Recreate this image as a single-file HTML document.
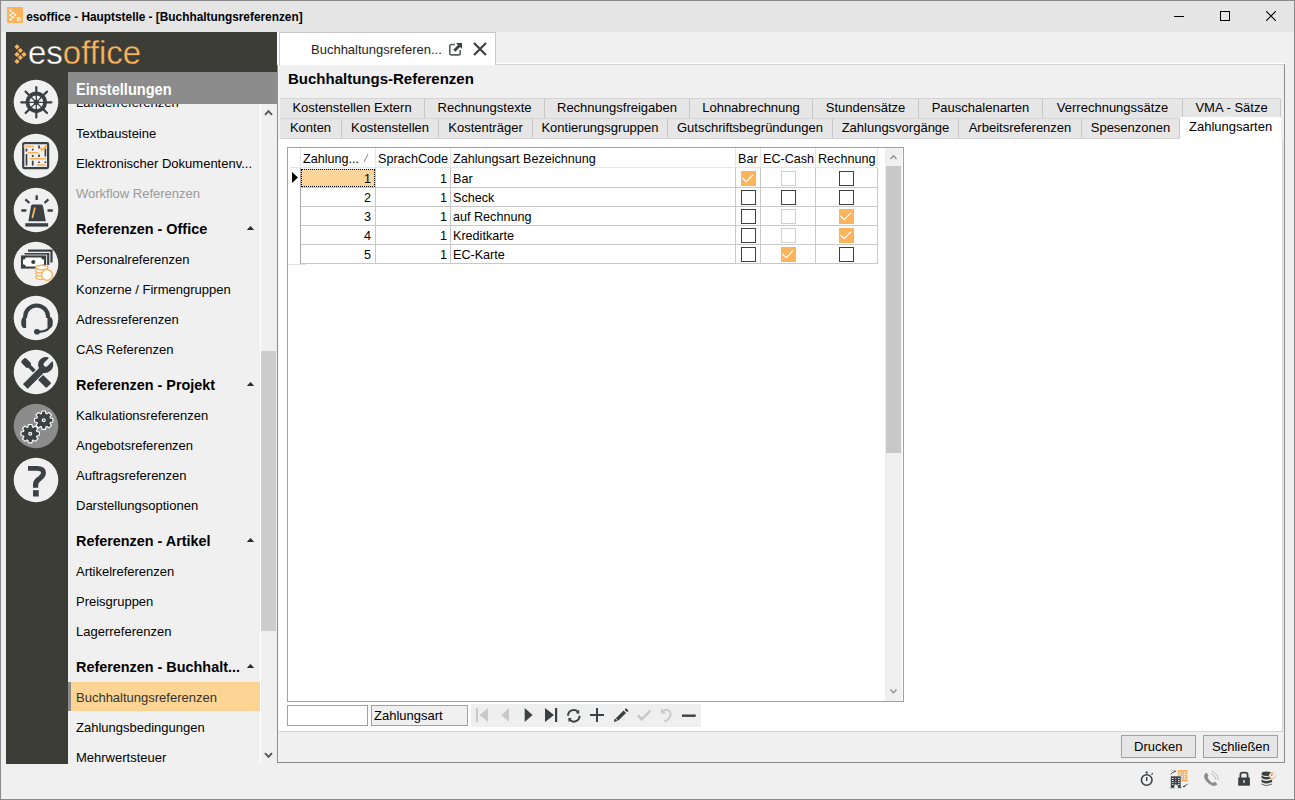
<!DOCTYPE html>
<html><head><meta charset="utf-8">
<style>
*{box-sizing:border-box;margin:0;padding:0}
html,body{width:1295px;height:800px;overflow:hidden;background:#f0f0f0;font-family:"Liberation Sans",sans-serif;font-size:13px;color:#000}
.a{position:absolute}
#win{position:absolute;left:0;top:0;width:1295px;height:800px;border:1px solid #8a8a8a;background:#f0f0f0}
#title{position:absolute;left:0;top:0;width:1295px;height:32px;background:#e5e5e5;border:1px solid #8a8a8a;border-bottom:none}
.t{position:absolute;white-space:nowrap;line-height:1}
/* sidebar */
#side{position:absolute;left:6px;top:32px;width:271px;height:732px;background:#3d3d38}
#sub{position:absolute;left:68px;top:72px;width:209px;height:692px;background:#f0f0f0;overflow:hidden}
#subhead{position:absolute;left:68px;top:72px;width:209px;height:32px;background:#8c8c8c}
.circ{position:absolute;left:14px;width:45px;height:45px;border-radius:50%;background:#f0f0f0}
.si{position:absolute;left:8px;font-size:13px;white-space:nowrap;line-height:1}
.sh{position:absolute;left:8px;font-size:14.4px;font-weight:bold;white-space:nowrap;line-height:1}
.tri{position:absolute;left:178px;width:0;height:0;border-left:5px solid transparent;border-right:5px solid transparent;border-bottom:5px solid #333}
/* tabs */
.tab1,.tab2{position:absolute;height:19px;background:#e6e6e6;border-right:1px solid #c8c8c8;font-size:13px;line-height:17px;text-align:center;white-space:nowrap}
.cb{position:absolute;width:15px;height:15px;border:1.7px solid #3b4043;background:#fff}
.cb.g{border-color:#d0d0d0}
.cb.on{background:#fbb45c;border-color:#fbb45c}
.cell{position:absolute;white-space:nowrap;font-size:12.6px;line-height:1}
</style></head><body>
<div id="win"></div>
<div id="title">
  <svg class="a" style="left:6px;top:6px" width="16" height="16" viewBox="1 1 16 16"><rect x="1" y="1" width="16" height="16" fill="#fbb45c"/><g fill="#fff"><path d="M4.45 3.00L5.90 4.45L4.45 5.90L3.00 4.45Z"/><path d="M6.86 5.41L8.31 6.86L6.86 8.31L5.41 6.86Z"/><path d="M4.45 7.51L5.90 8.96L4.45 10.41L3.00 8.96Z"/><path d="M9.1 7.51L10.55 8.96L9.1 10.41L7.65 8.96Z"/><path d="M6.86 9.75L8.31 11.2L6.86 12.65L5.41 11.2Z"/><path d="M4.45 12.01L5.90 13.46L4.45 14.91L3.00 13.46Z"/></g><path d="M11.5 11.7H12.6Q14.5 11.7 14.5 13Q14.5 14.3 12.6 14.3H11.5Z" fill="none" stroke="#fff" stroke-width="1.1"/></svg>
  <div class="t" style="left:25.2px;top:11px;font-size:11.85px;font-weight:bold">esoffice - Hauptstelle - [Buchhaltungsreferenzen]</div>
</div>

<div id="side">
  <svg class="a" style="left:0px;top:10px" width="24" height="34" viewBox="0 0 24 34"><g fill="#fbb45c"><path d="M11 2.2L13.6 4.8L11 7.4L8.4 4.8Z"/><path d="M14.3 6L16.9 8.6L14.3 11.2L11.7 8.6Z"/><path d="M11 9.8L13.6 12.4L11 15L8.4 12.4Z"/><path d="M18 9.8L20.6 12.4L18 15L15.4 12.4Z"/><path d="M14.3 13L16.9 15.6L14.3 18.2L11.7 15.6Z"/><path d="M11 16.8L13.6 19.4L11 22L8.4 19.4Z"/></g></svg>
  <div class="t" style="left:22px;top:4px;font-size:33px;color:#fff;-webkit-text-stroke:0.35px #3d3d38;letter-spacing:0px">es<span style="color:#fbb45c">office</span></div>
</div>


<!-- sidebar icons -->
<svg class="a" style="left:13px;top:79px" width="46" height="46" viewBox="0 0 46 46"><circle cx="23" cy="23" r="22.3" fill="#f0f0f0"/>
 <g stroke="#3b4043" stroke-width="2.2" stroke-linecap="round"><path d="M23.3 8.2V15M23.3 31.6V38.4M8.2 23.3H15M31.6 23.3H38.4M12.6 12.6L17 17M34 12.6L29.6 17M12.6 34L17 29.6M34 34L29.6 29.6"/></g><g stroke="#3b4043" stroke-width="1.3"><path d="M23.3 14V32.6M14 23.3H32.6M16.7 16.7L29.9 29.9M29.9 16.7L16.7 29.9"/></g>
 <circle cx="23.3" cy="23.3" r="8.8" fill="none" stroke="#3b4043" stroke-width="3.8"/>
 <circle cx="23.3" cy="23.3" r="2.6" fill="#3b4043"/>
</svg>
<svg class="a" style="left:13px;top:133px" width="46" height="46" viewBox="0 0 46 46"><circle cx="23" cy="23" r="22.3" fill="#f0f0f0"/>
 <rect x="10.2" y="10.2" width="24.9" height="24.9" rx="1" fill="none" stroke="#3b4043" stroke-width="2.2"/>
 <g fill="#3b4043"><rect x="12.65" y="15.6" width="1.7" height="3.00"/><rect x="12.65" y="21" width="1.7" height="11.60"/><rect x="18.85" y="15.6" width="1.7" height="1.90"/><rect x="18.85" y="22" width="1.7" height="2.00"/><rect x="18.85" y="27.5" width="1.7" height="5.10"/><rect x="25.15" y="12.5" width="1.7" height="3.00"/><rect x="25.15" y="21.5" width="1.7" height="2.50"/><rect x="25.15" y="28.5" width="1.7" height="1.50"/><rect x="31.55" y="15.5" width="1.7" height="8.00"/><rect x="31.55" y="28.5" width="1.7" height="1.50"/></g>
 <g fill="#fbb45c" stroke="#f0f0f0" stroke-width="0.9"><rect x="11" y="12.1" width="10.3" height="2.6" rx="1.3"/><rect x="14" y="18.4" width="12.2" height="2.6" rx="1.3"/><rect x="16.2" y="24.45" width="17.2" height="2.6" rx="1.3"/><rect x="23.3" y="30.8" width="10.1" height="2.6" rx="1.3"/></g>
 <path d="M27.2 14.6L29.3 17L33.8 12.3" fill="none" stroke="#fbb45c" stroke-width="2"/>
</svg>
<svg class="a" style="left:13px;top:187px" width="46" height="46" viewBox="0 0 46 46"><circle cx="23" cy="23" r="22.3" fill="#f0f0f0"/>
 <g stroke="#3b4043" stroke-width="2.3"><path d="M23.7 8.3V12.9M12.4 12.4L16.4 16M35.4 12.4L31.5 16M8.3 23.5H13.4M34.5 23.5H39.8"/></g>
 <path d="M19.5 17.5H28.4Q29.7 17.5 30 19L32.8 34.3H15.4L18 19Q18.3 17.5 19.5 17.5Z" fill="#3b4043"/>
 <rect x="12.3" y="36.2" width="22.8" height="3.4" fill="#3b4043"/>
 <path d="M21.9 20.5L19.4 31" stroke="#fbb45c" stroke-width="1.8"/>
</svg>
<svg class="a" style="left:13px;top:241px" width="46" height="46" viewBox="0 0 46 46"><circle cx="23" cy="23" r="22.3" fill="#f0f0f0"/>
 <path d="M15 9.7H38.5V21.6" fill="none" stroke="#3b4043" stroke-width="2.2"/>
 <path d="M11.5 13H35.2V24" fill="none" stroke="#3b4043" stroke-width="2.2"/>
 <rect x="7.6" y="14" width="26" height="14" fill="#3b4043" stroke="#f0f0f0" stroke-width="0.8"/>
 <path d="M10 18.6Q12.5 18.6 12.8 16.4H28.2Q28.5 18.6 31 18.6V23.3Q28.5 23.3 28.2 25.5H12.8Q12.5 23.3 10 23.3Z" fill="#fff"/>
 <circle cx="20.3" cy="21" r="2.1" fill="#3b4043"/>
 <g fill="#fff" stroke="#fbb45c" stroke-width="1.4"><ellipse cx="28.8" cy="36.2" rx="6" ry="2.2"/><ellipse cx="28.8" cy="33" rx="6" ry="2.2"/><ellipse cx="28.8" cy="29.8" rx="6" ry="2.2"/><ellipse cx="28.8" cy="26.5" rx="6" ry="2.2"/></g>
 <circle cx="34" cy="34" r="5.4" fill="#fff" stroke="#fbb45c" stroke-width="1.5"/>
</svg>
<svg class="a" style="left:13px;top:295px" width="46" height="46" viewBox="0 0 46 46"><circle cx="23" cy="23" r="22.3" fill="#f0f0f0"/>
 <path d="M12.1 23V21.9A11.5 11.5 0 0 1 35.1 21.9V23" fill="none" stroke="#3b4043" stroke-width="4"/>
 <path d="M13.1 21.9H10.8Q8.2 22.5 8.2 27.4Q8.2 32.3 10.8 32.9H13.1Z" fill="#3b4043"/>
 <path d="M34.5 21.9H37.2Q39.8 22.5 39.8 27.4Q39.8 32.3 37.2 32.9H34.5Z" fill="#3b4043"/>
 <path d="M36.8 31.5Q35.5 36.3 26 36.8" fill="none" stroke="#3b4043" stroke-width="2.3"/>
 <ellipse cx="24" cy="36.8" rx="3" ry="2.8" fill="#3b4043"/>
</svg>
<svg class="a" style="left:13px;top:349px" width="46" height="46" viewBox="0 0 46 46"><circle cx="23" cy="23" r="22.3" fill="#f0f0f0"/>
 <g transform="translate(22.8 23.6) rotate(45)" fill="#3b4043">
  <rect x="-18.4" y="-3.3" width="9.5" height="6.6" rx="2"/>
  <rect x="-10" y="-1.9" width="11" height="3.8"/>
  <rect x="0" y="-3.5" width="18.4" height="7" rx="0.8"/>
 </g>
 <g transform="translate(31.8 16.4) rotate(135)">
  <path d="M0 -8.2A8.2 8.2 0 0 1 6.5 -5H29.2V2.8H6.5A8.2 8.2 0 1 1 0 -8.2Z" fill="#3b4043" stroke="#f0f0f0" stroke-width="1.1"/>
  <path d="M-10 -2.4H-1.5Q0.8 -2.4 0.8 0Q0.8 2.4 -1.5 2.4H-10Z" fill="#f0f0f0"/>
 </g>
</svg>
<svg class="a" style="left:13px;top:403px" width="46" height="46" viewBox="0 0 46 46"><circle cx="23" cy="23" r="22.3" fill="#8c8c8c"/>
 <path d="M28.44 10.57 L28.91 8.07 L32.49 8.07 L32.96 10.57 L33.79 10.92 L35.89 9.48 L38.42 12.01 L36.98 14.11 L37.33 14.94 L39.83 15.41 L39.83 18.99 L37.33 19.46 L36.98 20.29 L38.42 22.39 L35.89 24.92 L33.79 23.48 L32.96 23.83 L32.49 26.33 L28.91 26.33 L28.44 23.83 L27.61 23.48 L25.51 24.92 L22.98 22.39 L24.42 20.29 L24.07 19.46 L21.57 18.99 L21.57 15.41 L24.07 14.94 L24.42 14.11 L22.98 12.01 L25.51 9.48 L27.61 10.92Z" fill="#3b4043" stroke="#fff" stroke-width="1.1" stroke-linejoin="round"/>
 <path d="M14.94 24.07 L15.41 21.57 L18.99 21.57 L19.46 24.07 L20.29 24.42 L22.39 22.98 L24.92 25.51 L23.48 27.61 L23.83 28.44 L26.33 28.91 L26.33 32.49 L23.83 32.96 L23.48 33.79 L24.92 35.89 L22.39 38.42 L20.29 36.98 L19.46 37.33 L18.99 39.83 L15.41 39.83 L14.94 37.33 L14.11 36.98 L12.01 38.42 L9.48 35.89 L10.92 33.79 L10.57 32.96 L8.07 32.49 L8.07 28.91 L10.57 28.44 L10.92 27.61 L9.48 25.51 L12.01 22.98 L14.11 24.42Z" fill="#3b4043" stroke="#fff" stroke-width="1.1" stroke-linejoin="round"/>
 <circle cx="30.7" cy="17.2" r="2" fill="#fff"/><circle cx="30.7" cy="17.2" r="0.8" fill="#3b4043"/>
 <circle cx="17.2" cy="30.7" r="2" fill="#fff"/><circle cx="17.2" cy="30.7" r="0.8" fill="#3b4043"/>
</svg>
<svg class="a" style="left:13px;top:457px" width="46" height="46" viewBox="0 0 46 46"><circle cx="23" cy="23" r="22.3" fill="#f0f0f0"/>
 <path d="M15 9H24Q32.9 9 32.9 15.8Q32.9 19.8 28.8 23Q25.2 25.6 25.2 28.3V30.7H20V27.8Q20 23.3 23.8 20.6Q28 17.8 28 15.6Q28 13.7 24 13.7H15Z" fill="#3b4043"/>
 <rect x="20" y="33.2" width="5.75" height="6.3" fill="#3b4043"/>
</svg>

<div id="sub">
  <div class="si" style="top:24px">Länderreferenzen</div>
  <div class="si" style="top:55px">Textbausteine</div>
  <div class="si" style="top:85px">Elektronischer Dokumentenv...</div>
  <div class="si" style="top:115px;color:#999">Workflow Referenzen</div>
  <div class="sh" style="top:150px">Referenzen - Office</div>
  <div class="si" style="top:181px">Personalreferenzen</div>
  <div class="si" style="top:211px">Konzerne / Firmengruppen</div>
  <div class="si" style="top:241px">Adressreferenzen</div>
  <div class="si" style="top:271px">CAS Referenzen</div>
  <div class="sh" style="top:306px">Referenzen - Projekt</div>
  <div class="si" style="top:337px">Kalkulationsreferenzen</div>
  <div class="si" style="top:367px">Angebotsreferenzen</div>
  <div class="si" style="top:397px">Auftragsreferenzen</div>
  <div class="si" style="top:427px">Darstellungsoptionen</div>
  <div class="sh" style="top:462px">Referenzen - Artikel</div>
  <div class="si" style="top:493px">Artikelreferenzen</div>
  <div class="si" style="top:523px">Preisgruppen</div>
  <div class="si" style="top:553px">Lagerreferenzen</div>
  <div class="sh" style="top:588px">Referenzen - Buchhalt...</div>
  <div class="a" style="left:0;top:610px;width:192px;height:29px;background:#fdd494;border-left:3px solid #8c8c8c"></div>
  <div class="si" style="top:619px;color:#333">Buchhaltungsreferenzen</div>
  <div class="si" style="top:649px">Zahlungsbedingungen</div>
  <div class="si" style="top:679px">Mehrwertsteuer</div>
</div>

<!-- sidebar scrollbar -->
<div class="a" style="left:260px;top:104px;width:1px;height:660px;background:#fff"></div>
<div class="a" style="left:261px;top:104px;width:16px;height:660px;background:#f0f0f0"></div>
<div class="a" style="left:261px;top:351px;width:15px;height:280px;background:#cdcdcd"></div>
<svg class="a" style="left:264px;top:109px" width="9" height="7"><path d="M1 5.8L4.5 2.2L8 5.8" fill="none" stroke="#555" stroke-width="1.9"/></svg>
<svg class="a" style="left:264px;top:752px" width="9" height="7"><path d="M1 1.2L4.5 4.8L8 1.2" fill="none" stroke="#555" stroke-width="1.9"/></svg>
<svg class="a" style="left:246px;top:225px" width="9" height="6"><path d="M0.8 5L4.5 0.9L8.2 5Z" fill="#2a2a2a"/></svg>
<svg class="a" style="left:246px;top:381px" width="9" height="6"><path d="M0.8 5L4.5 0.9L8.2 5Z" fill="#2a2a2a"/></svg>
<svg class="a" style="left:246px;top:537px" width="9" height="6"><path d="M0.8 5L4.5 0.9L8.2 5Z" fill="#2a2a2a"/></svg>
<svg class="a" style="left:246px;top:663px" width="9" height="6"><path d="M0.8 5L4.5 0.9L8.2 5Z" fill="#2a2a2a"/></svg>

<div id="subhead"><div class="t" style="left:8px;top:9px;font-size:16.4px;font-weight:bold;color:#fff;transform:scaleX(0.89);transform-origin:0 0">Einstellungen</div></div>


<!-- window controls -->
<div class="a" style="left:1174px;top:16px;width:10px;height:1px;background:#000"></div>
<div class="a" style="left:1220px;top:11px;width:10px;height:10px;border:1px solid #000"></div>
<svg class="a" style="left:1266px;top:11px" width="10" height="10" viewBox="0 0 10 10"><path d="M0 0L10 10M10 0L0 10" stroke="#000" stroke-width="1.1"/></svg>

<!-- content frame -->
<div class="a" style="left:277px;top:63px;width:1008px;height:1px;background:#fff"></div>
<div class="a" style="left:277px;top:64px;width:1008px;height:699px;border:1px solid #8c8c8c;border-top-color:#d0d0d0;background:#f0f0f0"></div>
<div class="a" style="left:278px;top:65px;width:1px;height:697px;background:#f8f8f8"></div>
<!-- doc tab -->
<div class="a" style="left:277px;top:32px;width:219px;height:33px;background:#fff"></div><div class="a" style="left:279px;top:32px;width:217px;height:33px;background:#fff;border:1px solid #c8c8c8;border-bottom:none"></div>
<div class="t" style="left:311px;top:43px;font-size:13px;color:#222">Buchhaltungsreferen...</div>
<svg class="a" style="left:448px;top:42px" width="15" height="15" viewBox="0 0 15 15"><path d="M7 2.5H3.5Q1.8 2.5 1.8 4.2V11.2Q1.8 12.9 3.5 12.9H10.5Q12.2 12.9 12.2 11.2V8" fill="none" stroke="#5a5f61" stroke-width="1.6"/><path d="M6.3 8.7L11.3 3.7" stroke="#3b4043" stroke-width="2.9"/><path d="M8 1H14V7Z" fill="#3b4043"/></svg>
<svg class="a" style="left:472px;top:41px" width="16" height="16" viewBox="0 0 16 16"><path d="M2 2L14 14M14 2L2 14" stroke="#3b4043" stroke-width="2.2"/></svg>

<div class="t" style="left:288px;top:71px;font-size:15px;font-weight:bold">Buchhaltungs-Referenzen</div>

<!-- tab strip -->
<div class="a" style="left:280px;top:98px;width:1001px;height:1px;background:#d4d4d4"></div>
<div class="a" style="left:280px;top:118px;width:1001px;height:1px;background:#d4d4d4"></div>
<div class="a" style="left:280px;top:138px;width:1001px;height:1px;background:#d4d4d4"></div>
<div class="tab1" style="left:280px;top:99px;width:145px">Kostenstellen Extern</div>
<div class="tab1" style="left:425px;top:99px;width:120px">Rechnungstexte</div>
<div class="tab1" style="left:545px;top:99px;width:145px">Rechnungsfreigaben</div>
<div class="tab1" style="left:690px;top:99px;width:123px">Lohnabrechnung</div>
<div class="tab1" style="left:813px;top:99px;width:106px">Stundensätze</div>
<div class="tab1" style="left:919px;top:99px;width:124px">Pauschalenarten</div>
<div class="tab1" style="left:1043px;top:99px;width:140px">Verrechnungssätze</div>
<div class="tab1" style="left:1183px;top:99px;width:98px">VMA - Sätze</div>
<div class="tab2" style="left:280px;top:119px;width:62px">Konten</div>
<div class="tab2" style="left:342px;top:119px;width:97px">Kostenstellen</div>
<div class="tab2" style="left:439px;top:119px;width:94px">Kostenträger</div>
<div class="tab2" style="left:533px;top:119px;width:135px">Kontierungsgruppen</div>
<div class="tab2" style="left:668px;top:119px;width:165px">Gutschriftsbegründungen</div>
<div class="tab2" style="left:833px;top:119px;width:126px">Zahlungsvorgänge</div>
<div class="tab2" style="left:959px;top:119px;width:123px">Arbeitsreferenzen</div>
<div class="tab2" style="left:1082px;top:119px;width:98px">Spesenzonen</div>

<!-- tab page -->
<div class="a" style="left:279px;top:139px;width:1004px;height:593px;background:#fff;border-right:1px solid #d4d4d4;border-bottom:1px solid #d4d4d4"></div>
<div class="a" style="left:1180px;top:117px;width:101px;height:23px;background:#fff"></div>
<div class="t" style="left:1189px;top:120px;font-size:13px">Zahlungsarten</div>

<!-- grid -->
<div class="a" style="left:287px;top:147px;width:617px;height:555px;border:1px solid #a0a0a0;background:#fff"></div>


<!-- grid header lines -->
<div class="a" style="left:300px;top:148px;width:1px;height:20px;background:#e6e6e6"></div>
<div class="a" style="left:375px;top:148px;width:1px;height:20px;background:#e6e6e6"></div>
<div class="a" style="left:450px;top:148px;width:1px;height:20px;background:#e6e6e6"></div>
<div class="a" style="left:735px;top:148px;width:1px;height:20px;background:#e6e6e6"></div>
<div class="a" style="left:760px;top:148px;width:1px;height:20px;background:#e6e6e6"></div>
<div class="a" style="left:815px;top:148px;width:1px;height:20px;background:#e6e6e6"></div>
<div class="a" style="left:877px;top:148px;width:1px;height:20px;background:#e6e6e6"></div>
<div class="a" style="left:290px;top:167px;width:588px;height:1px;background:#e6e6e6"></div>
<div class="cell" style="left:303px;top:153px">Zahlung...</div>
<svg class="a" style="left:363px;top:153px" width="6" height="10"><path d="M1 9L5 1" stroke="#888" stroke-width="1"/></svg>
<div class="cell" style="left:378px;top:153px">SprachCode</div>
<div class="cell" style="left:453px;top:153px">Zahlungsart Bezeichnung</div>
<div class="cell" style="left:738px;top:153px">Bar</div>
<div class="cell" style="left:763px;top:153px">EC-Cash</div>
<div class="cell" style="left:818px;top:153px">Rechnung</div>
<!-- grid body -->
<div class="a" style="left:300px;top:168px;width:1px;height:96px;background:#a8a8a8"></div><div class="a" style="left:288px;top:264px;width:18px;height:1px;background:#e0e0e0"></div>
<div class="a" style="left:375px;top:168px;width:1px;height:96px;background:#c8c8c8"></div>
<div class="a" style="left:450px;top:168px;width:1px;height:96px;background:#c8c8c8"></div>
<div class="a" style="left:735px;top:168px;width:1px;height:96px;background:#c8c8c8"></div>
<div class="a" style="left:760px;top:168px;width:1px;height:96px;background:#c8c8c8"></div>
<div class="a" style="left:815px;top:168px;width:1px;height:96px;background:#c8c8c8"></div>
<div class="a" style="left:877px;top:168px;width:1px;height:96px;background:#c8c8c8"></div>
<div class="a" style="left:301px;top:187px;width:577px;height:1px;background:#c8c8c8"></div>
<div class="a" style="left:301px;top:206px;width:577px;height:1px;background:#c8c8c8"></div>
<div class="a" style="left:301px;top:225px;width:577px;height:1px;background:#c8c8c8"></div>
<div class="a" style="left:301px;top:244px;width:577px;height:1px;background:#c8c8c8"></div>
<div class="a" style="left:301px;top:263px;width:577px;height:1px;background:#c8c8c8"></div>
<div class="a" style="left:301px;top:169px;width:74px;height:18px;background:#fdd49a;border:1px dotted #000"></div>
<svg class="a" style="left:291px;top:171px" width="8" height="13"><path d="M1 1L7 6.5L1 12Z" fill="#000"/></svg>
<div class="cell" style="left:301px;top:173px;width:70px;text-align:right">1</div>
<div class="cell" style="left:376px;top:173px;width:71px;text-align:right">1</div>
<div class="cell" style="left:453px;top:173px">Bar</div>
<div class="cb on" style="left:741px;top:171px"><svg width="15" height="15" style="position:absolute;left:-1.7px;top:-1.7px"><path d="M2.5 8L6.2 11.6L13.1 4.6" fill="none" stroke="#fff" stroke-width="1.25"/></svg></div>
<div class="cb g" style="left:781px;top:171px"></div>
<div class="cb" style="left:839px;top:171px"></div>
<div class="cell" style="left:301px;top:192px;width:70px;text-align:right">2</div>
<div class="cell" style="left:376px;top:192px;width:71px;text-align:right">1</div>
<div class="cell" style="left:453px;top:192px">Scheck</div>
<div class="cb" style="left:741px;top:190px"></div>
<div class="cb" style="left:781px;top:190px"></div>
<div class="cb" style="left:839px;top:190px"></div>
<div class="cell" style="left:301px;top:211px;width:70px;text-align:right">3</div>
<div class="cell" style="left:376px;top:211px;width:71px;text-align:right">1</div>
<div class="cell" style="left:453px;top:211px">auf Rechnung</div>
<div class="cb" style="left:741px;top:209px"></div>
<div class="cb g" style="left:781px;top:209px"></div>
<div class="cb on" style="left:839px;top:209px"><svg width="15" height="15" style="position:absolute;left:-1.7px;top:-1.7px"><path d="M2.5 8L6.2 11.6L13.1 4.6" fill="none" stroke="#fff" stroke-width="1.25"/></svg></div>
<div class="cell" style="left:301px;top:230px;width:70px;text-align:right">4</div>
<div class="cell" style="left:376px;top:230px;width:71px;text-align:right">1</div>
<div class="cell" style="left:453px;top:230px">Kreditkarte</div>
<div class="cb" style="left:741px;top:228px"></div>
<div class="cb g" style="left:781px;top:228px"></div>
<div class="cb on" style="left:839px;top:228px"><svg width="15" height="15" style="position:absolute;left:-1.7px;top:-1.7px"><path d="M2.5 8L6.2 11.6L13.1 4.6" fill="none" stroke="#fff" stroke-width="1.25"/></svg></div>
<div class="cell" style="left:301px;top:249px;width:70px;text-align:right">5</div>
<div class="cell" style="left:376px;top:249px;width:71px;text-align:right">1</div>
<div class="cell" style="left:453px;top:249px">EC-Karte</div>
<div class="cb" style="left:741px;top:247px"></div>
<div class="cb on" style="left:781px;top:247px"><svg width="15" height="15" style="position:absolute;left:-1.7px;top:-1.7px"><path d="M2.5 8L6.2 11.6L13.1 4.6" fill="none" stroke="#fff" stroke-width="1.25"/></svg></div>
<div class="cb" style="left:839px;top:247px"></div>

<!-- grid scrollbar -->
<div class="a" style="left:885px;top:148px;width:17px;height:553px;background:#f0f0f0"></div>
<div class="a" style="left:886px;top:166px;width:15px;height:287px;background:#c8c8c8"></div>
<svg class="a" style="left:889px;top:154px" width="10" height="7"><path d="M1.5 5L4.5 1.7L7.5 5" fill="none" stroke="#8a8a8a" stroke-width="1.25"/></svg>
<svg class="a" style="left:889px;top:688px" width="10" height="7"><path d="M1.5 1.5L4.5 4.8L7.5 1.5" fill="none" stroke="#8a8a8a" stroke-width="1.25"/></svg>

<!-- navigator -->
<div class="a" style="left:287px;top:705px;width:81px;height:21px;background:#fff;border:1px solid #a0a0a0"></div>
<div class="a" style="left:371px;top:705px;width:97px;height:21px;background:#f0f0f0;border:1px solid #a0a0a0"></div>
<div class="t" style="left:374px;top:709px;font-size:13px">Zahlungsart</div>
<div class="a" style="left:471px;top:704px;width:230px;height:23px;background:#efefef"></div>

<!-- buttons -->
<div class="a" style="left:1121px;top:735px;width:75px;height:23px;background:#e6e6e6;border:1px solid #a0a0a0"></div>
<div class="t" style="left:1134px;top:740px;font-size:13px">Drucken</div>
<div class="a" style="left:1203px;top:735px;width:75px;height:23px;background:#e6e6e6;border:1px solid #a0a0a0"></div>
<div class="t" style="left:1212px;top:740px;font-size:13px">S<u>c</u>hließen</div>


<!-- nav icons -->
<svg class="a" style="left:471px;top:704px" width="230" height="23" viewBox="471 704 230 23">
 <rect x="476" y="708" width="2" height="14" fill="#c8caca"/>
 <path d="M488 708V722L479.5 715Z" fill="#c8caca"/>
 <path d="M509 708V722L501.5 715Z" fill="#c8caca"/>
 <path d="M524.7 708V722L532.6 715Z" fill="#3b4043"/>
 <path d="M545 708V722L554 715Z" fill="#3b4043"/>
 <rect x="555" y="708" width="2.2" height="14" fill="#3b4043"/>
  <path d="M568 715.8A5.8 5.8 0 0 1 577.9 711.7" fill="none" stroke="#3b4043" stroke-width="1.9"/>
 <path d="M579.25 713.8L575.9 713.3L579.1 709.4Z" fill="#3b4043"/>
 <path d="M579.6 715.8A5.8 5.8 0 0 1 569.7 719.9" fill="none" stroke="#3b4043" stroke-width="1.9"/>
 <path d="M568.35 717.8L571.7 718.3L568.5 722.2Z" fill="#3b4043"/>
<path d="M590 715H604M597 708V722" stroke="#3b4043" stroke-width="2"/>
 <path d="M617 719.5L624.8 711.7" stroke="#3b4043" stroke-width="3.4"/>
 <path d="M626 709.6L627.2 710.8" stroke="#3b4043" stroke-width="2.2" stroke-linecap="round"/>
 <path d="M613.8 722L614.9 718.2L617.6 720.9Z" fill="#3b4043"/>
 <path d="M637.8 715.2L641.6 719.3L650.5 710.6" fill="none" stroke="#c8caca" stroke-width="2.6"/>
 <path d="M662.5 711.5Q665.5 708.8 668.5 710.5Q671.5 712.5 670.2 716.5Q669 719.5 664.5 721.5" fill="none" stroke="#c8caca" stroke-width="2"/>
 <path d="M661 708.3V713.5H666.2Z" fill="#c8caca"/>
 <path d="M682 715.7H695.7" stroke="#3b4043" stroke-width="2.4"/>
</svg>

<!-- status bar icons -->
<svg class="a" style="left:1130px;top:762px" width="160" height="36" viewBox="1130 762 160 36">
 <circle cx="1146.7" cy="780" r="5.3" fill="none" stroke="#3b4043" stroke-width="1.6"/>
 <path d="M1146.7 777V781" stroke="#3b4043" stroke-width="1.4"/>
 <rect x="1145.7" y="771.5" width="2" height="2" fill="#3b4043"/>
 <path d="M1151.5 774.5L1152.8 773.2" stroke="#3b4043" stroke-width="1.2"/>
 <path d="M1177.7 770H1187.2V780.3H1188.2V781.4H1177.7Z" fill="#fbb45c"/>
 <g fill="#fff"><rect x="1179" y="772" width="1.6" height="0.9"/><rect x="1182" y="772" width="0.9" height="0.9"/><rect x="1184" y="772" width="1.6" height="0.9"/><rect x="1179" y="774.1" width="1.6" height="0.9"/><rect x="1182" y="774.1" width="0.9" height="0.9"/><rect x="1184" y="774.1" width="1.6" height="0.9"/><rect x="1182" y="776.2" width="0.9" height="0.9"/><rect x="1184" y="776.2" width="1.6" height="0.9"/><rect x="1182" y="778.3" width="0.9" height="0.9"/><rect x="1184" y="778.3" width="1.6" height="0.9"/></g>
 <path d="M1170.6 776H1181V787.2H1181.8V788.2H1177.6V785.2H1174.6V788.2H1169.9V787.2H1170.6Z" fill="#3b4043" stroke="#f0f0f0" stroke-width="0.6"/>
 <g fill="#f0f0f0"><rect x="1172" y="778" width="1.6" height="0.9"/><rect x="1175.3" y="778" width="0.9" height="0.9"/><rect x="1178" y="778" width="1.6" height="0.9"/><rect x="1172" y="780" width="1.6" height="0.9"/><rect x="1175.3" y="780" width="0.9" height="0.9"/><rect x="1178" y="780" width="1.6" height="0.9"/><rect x="1172" y="782" width="1.6" height="0.9"/><rect x="1175.3" y="782" width="0.9" height="0.9"/><rect x="1178" y="782" width="1.6" height="0.9"/><rect x="1172" y="784" width="1.6" height="0.9"/><rect x="1175.3" y="784" width="0.9" height="0.9"/><rect x="1178" y="784" width="1.6" height="0.9"/></g>
 <path d="M1170.8 774.3Q1172.5 772 1174.6 771.6" fill="none" stroke="#3b4043" stroke-width="1"/><path d="M1176.2 771L1173.8 770.2L1174.6 772.6Z" fill="#3b4043"/>
 <path d="M1187.6 783.8Q1186 786 1183.8 786.4" fill="none" stroke="#3b4043" stroke-width="1"/><path d="M1182.3 786.6L1184.8 785.4L1184.4 787.6Z" fill="#3b4043"/>
 <path d="M1205.5 773.5Q1203 775 1205 779.5Q1208.5 784.5 1213.5 786Q1216 786 1217.5 784.3L1215 781.8L1212.8 783Q1209.5 781.5 1207.5 777.5L1208.5 775.5L1206.5 772.5Z" fill="#8c8c8c"/>
 <path d="M1211 773.5Q1215.2 775.3 1216 779.5M1211.5 771.2Q1217.8 773.5 1218.3 779.8" fill="none" stroke="#b4b4b4" stroke-width="0.9"/>
 <path d="M1240.4 778.5V774.8Q1240.4 772.6 1242.6 772.6H1245.4Q1247.6 772.6 1247.6 774.8V778.5" fill="none" stroke="#3b4043" stroke-width="1.8"/>
 <rect x="1238.2" y="777.5" width="11.7" height="8.2" fill="#3b4043"/>
 <rect x="1243.4" y="780" width="1.3" height="3" fill="#f0f0f0"/>
 <g fill="#3b4043"><ellipse cx="1266.8" cy="773.8" rx="5.3" ry="2.2"/><path d="M1261.5 775.5Q1266.8 778.5 1272.1 775.5V778Q1266.8 781 1261.5 778Z"/><path d="M1261.5 779.5Q1266.8 782.5 1272.1 779.5V782Q1266.8 785 1261.5 782Z"/><path d="M1261.5 783.5Q1266.8 786.5 1272.1 783.5V784.3Q1266.8 787.3 1261.5 784.3Z"/></g>
 <circle cx="1272.5" cy="775.5" r="3.1" fill="#f0f0f0" stroke="#fbb45c" stroke-width="1" stroke-dasharray="16.5 3"/><path d="M1272.2 773.8L1271.6 775.8" stroke="#3b4043" stroke-width="0.8"/>
</svg>

</body></html>
